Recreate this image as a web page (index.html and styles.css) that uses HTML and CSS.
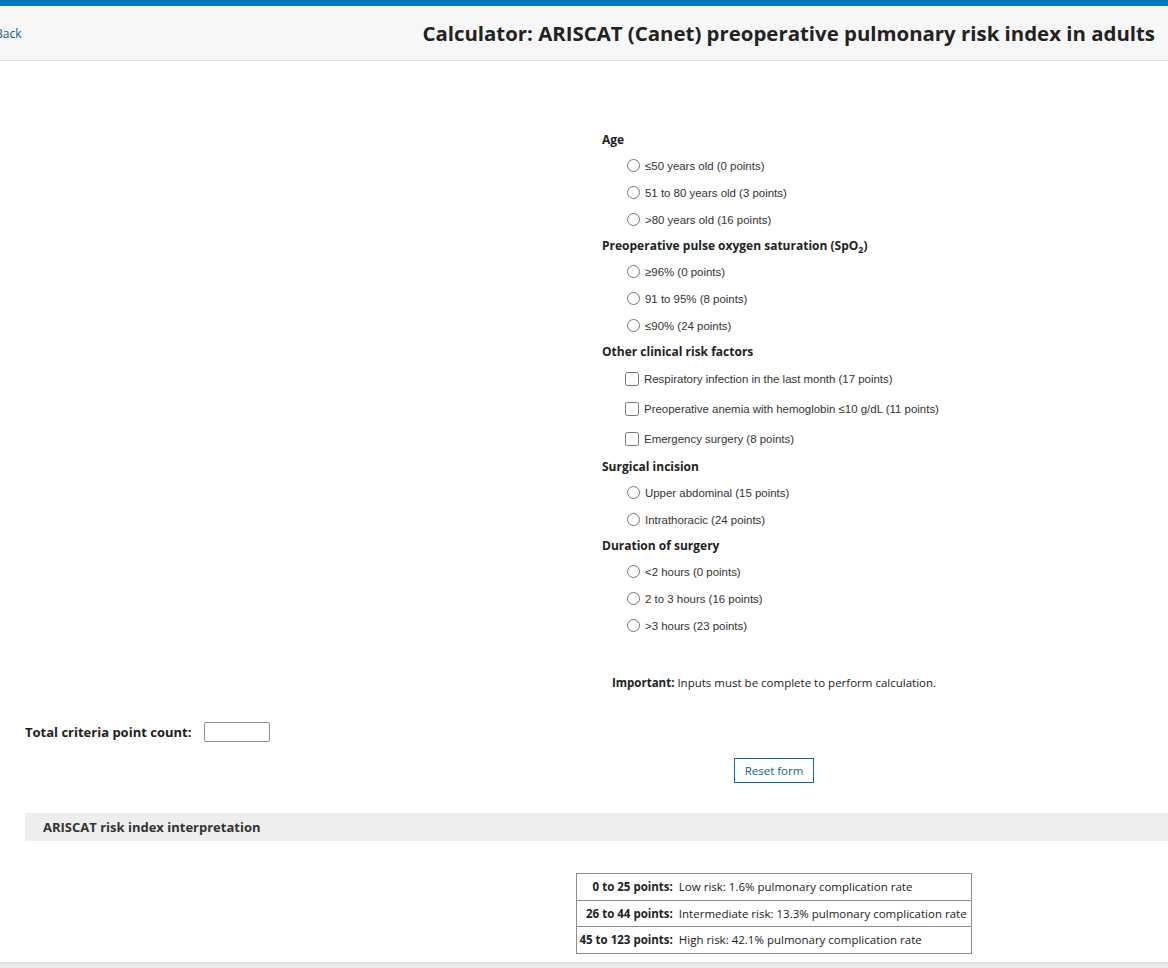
FILE: index.html
```html
<!DOCTYPE html>
<html lang="en">
<head>
    <meta charset="UTF-8">
    <meta name="viewport" content="width=device-width, initial-scale=1.0">
    <title>ARISCAT calculator</title>
    <link rel="stylesheet" href="styles.css">
</head>
<body>
    <div class="topbar"></div>
    <div class="header">
        <a href="#" class="back-link">Back</a>
        <h1>Calculator: ARISCAT (Canet) preoperative pulmonary risk index in adults</h1>
    </div>

    <form class="calc-form">
        <div class="field-group">
            <div class="group-label">Age</div>
            <label class="option"><input type="radio" name="age"> &le;50 years old (0 points)</label>
            <label class="option"><input type="radio" name="age"> 51 to 80 years old (3 points)</label>
            <label class="option"><input type="radio" name="age"> &gt;80 years old (16 points)</label>
        </div>
        <div class="field-group">
            <div class="group-label">Preoperative pulse oxygen saturation (SpO<sub>2</sub>)</div>
            <label class="option"><input type="radio" name="spo2"> &ge;96% (0 points)</label>
            <label class="option"><input type="radio" name="spo2"> 91 to 95% (8 points)</label>
            <label class="option"><input type="radio" name="spo2"> &le;90% (24 points)</label>
        </div>
        <div class="field-group">
            <div class="group-label">Other clinical risk factors</div>
            <label class="option check"><input type="checkbox"> Respiratory infection in the last month (17 points)</label>
            <label class="option check"><input type="checkbox"> Preoperative anemia with hemoglobin &le;10 g/dL (11 points)</label>
            <label class="option check"><input type="checkbox"> Emergency surgery (8 points)</label>
        </div>
        <div class="field-group">
            <div class="group-label">Surgical incision</div>
            <label class="option"><input type="radio" name="incision"> Upper abdominal (15 points)</label>
            <label class="option"><input type="radio" name="incision"> Intrathoracic (24 points)</label>
        </div>
        <div class="field-group">
            <div class="group-label">Duration of surgery</div>
            <label class="option"><input type="radio" name="duration"> &lt;2 hours (0 points)</label>
            <label class="option"><input type="radio" name="duration"> 2 to 3 hours (16 points)</label>
            <label class="option"><input type="radio" name="duration"> &gt;3 hours (23 points)</label>
        </div>
        <p class="notice"><b>Important:</b> Inputs must be complete to perform calculation.</p>
    </form>

    <div class="total-row">
        <span class="total-label">Total criteria point count:</span>
        <input type="text" class="total-input" readonly>
    </div>

    <div class="reset-row">
        <button type="button" class="reset-btn">Reset form</button>
    </div>

    <div class="section-bar">ARISCAT risk index interpretation</div>

    <div class="table-wrap">
        <table class="risk-table">
            <tr><th>0 to 25 points:</th><td>Low risk: 1.6% pulmonary complication rate</td></tr>
            <tr><th>26 to 44 points:</th><td>Intermediate risk: 13.3% pulmonary complication rate</td></tr>
            <tr><th>45 to 123 points:</th><td>High risk: 42.1% pulmonary complication rate</td></tr>
        </table>
    </div>

    <div class="footer"></div>
</body>
</html>
```

FILE: styles.css
```css
html, body {
    margin: 0;
    padding: 0;
}
body {
    background: #fff;
    color: #222;
    font-family: "Open Sans", "Noto Sans", Arial, sans-serif;
    overflow: hidden;
}
.topbar {
    height: 6px;
    background-color: #0077c0;
}
.header {
    display: flex;
    align-items: center;
    justify-content: space-between;
    height: 54px;
    background-color: #f7f7f7;
    border-bottom: 1px solid #dcdcdc;
}
.back-link {
    margin-left: -5px;
    font-size: 12px;
    color: #0a5f96;
    text-decoration: none;
}
.header h1 {
    margin: 0 13px 0 0;
    font-size: 20.4px;
    font-weight: 700;
    color: #222;
}
/* Calculator inputs */
.calc-form {
    margin: 66px 0 0 602px;
    width: 344px;
}
.group-label {
    height: 25px;
    line-height: 25px;
    font-size: 12px;
    font-weight: 700;
    color: #222;
}
.group-label sub {
    font-size: 9px;
    line-height: 0;
}
.option {
    display: flex;
    align-items: center;
    height: 27px;
    font-family: "Liberation Sans", Arial, sans-serif;
    font-size: 11.45px;
    color: #333;
    white-space: nowrap;
}
.option.check {
    height: 30px;
}
.option input {
    width: 13px;
    height: 13px;
    margin: 0 5px 0 25px;
}
.option.check input {
    width: 14px;
    height: 14px;
    margin-left: 23px;
}
.notice {
    margin: 36px 0 0;
    text-align: center;
    font-size: 11.5px;
    white-space: nowrap;
}
.total-row {
    display: flex;
    align-items: center;
    gap: 13px;
    margin: 32px 0 0 25px;
}
.total-label {
    font-size: 13px;
    font-weight: 700;
    color: #222;
}
.total-input {
    width: 66px;
    height: 20px;
    box-sizing: border-box;
    border: 1px solid #8f8f8f;
    border-radius: 2px;
    padding: 0;
}
.reset-row {
    margin: 16px 0 0 602px;
    width: 344px;
    display: flex;
    justify-content: center;
}
.reset-btn {
    width: 80px;
    height: 25px;
    background: #fff;
    border: 1px solid #0a6aa8;
    border-radius: 0;
    color: #0a5f96;
    font-family: "Open Sans", "Noto Sans", Arial, sans-serif;
    font-size: 11.5px;
    cursor: pointer;
}
/* Interpretation */
.section-bar {
    margin: 30px 0 0 25px;
    height: 28px;
    line-height: 28px;
    padding-left: 18px;
    background-color: #eeeeee;
    font-size: 13px;
    font-weight: 700;
    color: #333;
}
.table-wrap {
    margin: 32px 0 0 380px;
    display: flex;
    justify-content: center;
}
.risk-table {
    border-collapse: collapse;
    border: 1px solid #8c8c8c;
    font-size: 11.5px;
    width: 396px;
}
.risk-table tr {
    height: 26.5px;
    border-bottom: 1px solid #8c8c8c;
}
.risk-table th {
    text-align: right;
    font-weight: 700;
    padding: 0 3px 0 2px;
    white-space: nowrap;
}
.risk-table td {
    padding: 0 3px;
    white-space: nowrap;
    color: #222;
}
.footer {
    margin-top: 8px;
    height: 40px;
    background-color: #ebebeb;
    border-top: 2px solid #dedede;
}
```
